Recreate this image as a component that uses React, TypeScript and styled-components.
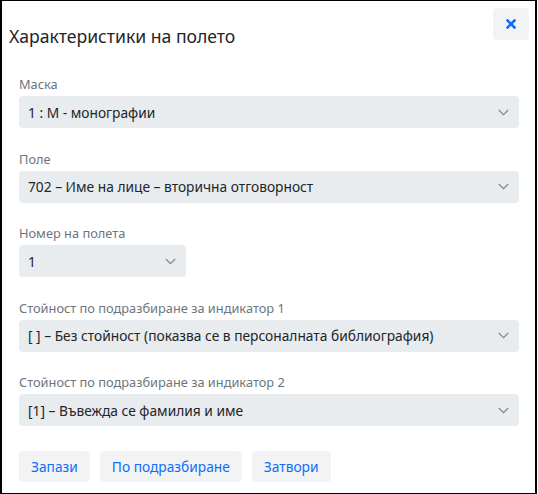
import React from "react";
import styled, { createGlobalStyle } from "styled-components";

const Global = createGlobalStyle`
  html, body { margin: 0; padding: 0; background: #fff; }
  body { font-family: "Noto Sans", "Open Sans", sans-serif; color: #212529; }
  * { box-sizing: border-box; }
`;

const Dialog = styled.div`
  width: 537px;
  height: 494px;
  border: 1px solid #000;
  border-left-width: 2px;
  border-right-width: 2px;
  background: #fff;
  display: flex;
  flex-direction: column;
`;

const Header = styled.div`
  display: flex;
  justify-content: space-between;
  align-items: flex-start;
  padding: 7px 6px 0 7px;
`;

const Title = styled.h1`
  margin: 17px 0 0 0;
  font-size: 17.6px;
  line-height: 22px;
  font-weight: 400;
  color: #212529;
`;

const CloseButton = styled.button`
  width: 36px;
  height: 32px;
  border: none;
  border-radius: 4px;
  background: #f2f3f5;
  display: flex;
  align-items: center;
  justify-content: center;
  padding: 0;
  cursor: pointer;
`;

const Body = styled.div`
  display: flex;
  flex-direction: column;
  gap: 21.5px;
  padding: 28px 16px 0 17px;
`;

const Field = styled.div`
  display: flex;
  flex-direction: column;
  gap: 3px;
`;

const Label = styled.label`
  font-size: 12.8px;
  line-height: 18px;
  color: #6c757d;
`;

const SelectBox = styled.div<{ $width?: number }>`
  width: ${(p) => (p.$width ? `${p.$width}px` : "100%")};
  height: 32px;
  background: #e9ecef;
  border-radius: 4px;
  display: flex;
  align-items: center;
  justify-content: space-between;
  padding: 0 10px 0 9px;
  font-size: 13.75px;
  color: #212529;
`;

const Actions = styled.div`
  display: flex;
  gap: 10px;
  padding: 25px 0 0 17px;
`;

const ActionButton = styled.button`
  height: 31px;
  padding: 0 12px;
  border: none;
  border-radius: 4px;
  background: #f2f3f5;
  color: #0d6efd;
  font-family: inherit;
  font-size: 13.75px;
  cursor: pointer;
`;

const Chevron = () => (
  <svg width="11" height="7" viewBox="0 0 11 7" fill="none">
    <path d="M0.8 1 L5.5 5.6 L10.2 1" stroke="#80868f" strokeWidth="1.2" />
  </svg>
);

const CloseIcon = () => (
  <svg width="10" height="10" viewBox="0 0 10 10">
    <path d="M1.5 1.5 L8.5 8.5 M8.5 1.5 L1.5 8.5" stroke="#0d6efd" strokeWidth="2.6" strokeLinecap="square" />
  </svg>
);

const fields: { label: string; value: string; width?: number }[] = [
  { label: "Маска", value: "1 : М - монографии" },
  { label: "Поле", value: "702 – Име на лице – вторична отговорност" },
  { label: "Номер на полета", value: "1", width: 167 },
  {
    label: "Стойност по подразбиране за индикатор 1",
    value: "[ ] – Без стойност (показва се в персоналната библиография)",
  },
  { label: "Стойност по подразбиране за индикатор 2", value: "[1] – Въвежда се фамилия и име" },
];

export default function App() {
  return (
    <>
      <Global />
      <Dialog>
        <Header>
          <Title>Характеристики на полето</Title>
          <CloseButton aria-label="Затвори">
            <CloseIcon />
          </CloseButton>
        </Header>
        <Body>
          {fields.map((f) => (
            <Field key={f.label}>
              <Label>{f.label}</Label>
              <SelectBox $width={f.width}>
                <span>{f.value}</span>
                <Chevron />
              </SelectBox>
            </Field>
          ))}
        </Body>
        <Actions>
          <ActionButton>Запази</ActionButton>
          <ActionButton>По подразбиране</ActionButton>
          <ActionButton>Затвори</ActionButton>
        </Actions>
      </Dialog>
    </>
  );
}
